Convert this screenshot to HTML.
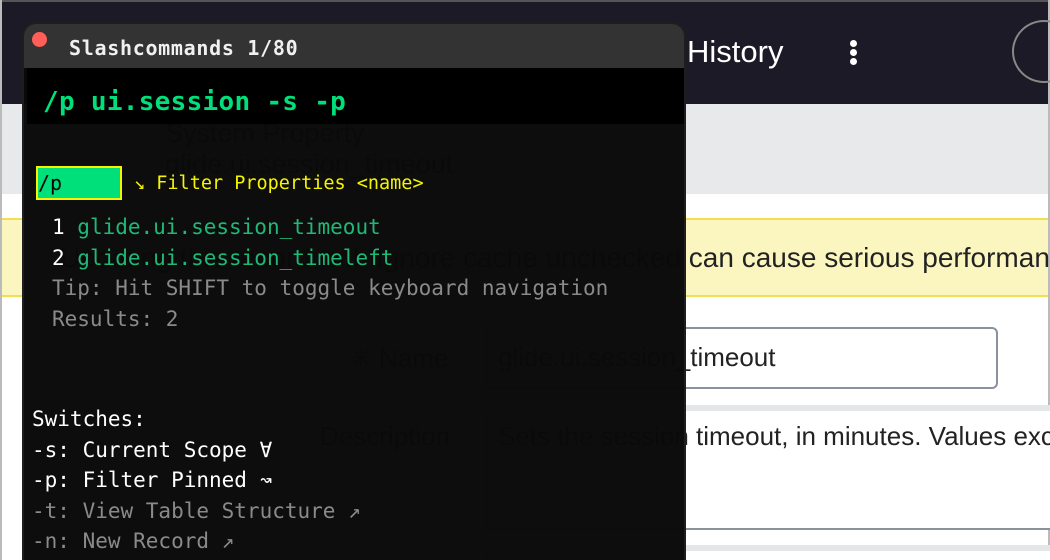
<!DOCTYPE html>
<html><head><style>
*{margin:0;padding:0;box-sizing:border-box}
html,body{width:1050px;height:560px;overflow:hidden}
body{background:#fff;position:relative;font-family:"Liberation Sans",sans-serif}
.a{position:absolute;white-space:nowrap}
.m{font-family:"DejaVu Sans Mono","Liberation Mono",monospace}
</style></head><body>
<!-- page -->
<div class="a" style="left:0;top:0;width:1050px;height:2px;background:#555"></div>
<div class="a" style="left:0;top:0;width:2px;height:560px;background:#bbb"></div>
<div class="a" style="right:0;top:0;width:2px;height:560px;background:#bbb"></div>
<div class="a" style="left:2px;top:2px;width:1046px;height:102px;background:#1b1a26"></div>
<div class="a" style="left:687px;top:34px;font-size:31px;color:#fff">History</div>
<div class="a" style="left:850px;top:40px;width:7px;height:7px;border-radius:50%;background:#fff"></div>
<div class="a" style="left:850px;top:49px;width:7px;height:7px;border-radius:50%;background:#fff"></div>
<div class="a" style="left:850px;top:58px;width:7px;height:7px;border-radius:50%;background:#fff"></div>
<div class="a" style="left:1012px;top:20px;width:64px;height:63px;border-radius:50%;border:2px solid #888"></div>
<div class="a" style="left:2px;top:104px;width:1046px;height:90px;background:#e8e9eb"></div>
<div class="a" style="left:165px;top:118px;font-size:27px;color:#222;line-height:31px">System Property<br>glide.ui.session_timeout</div>
<div class="a" style="left:2px;top:218px;width:1046px;height:79px;background:#fbf6c0;border-top:2px solid #f0e050;border-bottom:2px solid #f0e050"></div>
<div class="a" style="left:60px;top:242px;font-size:28px;color:#222">Updating this record with Ignore cache unchecked can cause serious performance</div>
<div class="a" style="left:350px;top:343px;font-size:26px;color:#333">✳ Name</div>
<div class="a" style="left:485px;top:327px;width:513px;height:62px;border:2px solid #8a929c;border-radius:6px;background:#fff"></div>
<div class="a" style="left:498px;top:342px;font-size:26px;color:#222">glide.ui.session_timeout</div>
<div class="a" style="left:320px;top:421px;font-size:26px;color:#333">Description</div>
<div class="a" style="left:485px;top:405px;width:570px;height:125px;border:2px solid #8a929c;border-top:6px solid #e4e6e8;border-radius:6px;background:#fff"></div>
<div class="a" style="left:498px;top:421px;font-size:26px;color:#222">Sets the session timeout, in minutes. Values exceed</div>
<div class="a" style="left:485px;top:545px;width:570px;height:15px;border:2px solid #8a929c;border-bottom:none;border-top:6px solid #e4e6e8;border-radius:6px 0 0 0;background:#fff"></div>
<!-- popup -->
<div class="a" style="left:22px;top:22px;width:664px;height:560px;border-radius:14px 14px 0 0;border:2px solid #1e1e1e;background:rgba(10,10,10,0.99);overflow:hidden">
  <div class="a" style="left:0;top:0;width:664px;height:44px;background:#333"></div>
  <div class="a" style="left:8px;top:8px;width:15px;height:15px;border-radius:50%;background:#ff5f57"></div>
  <div class="a m" style="left:45px;top:12px;font-size:20px;font-weight:bold;color:#f0f0f0;letter-spacing:0.7px">Slashcommands 1/80</div>
  <div class="a" style="left:3px;top:44px;width:660px;height:56px;background:#000"></div>
  <div class="a m" style="left:19px;top:63px;font-size:26px;font-weight:bold;color:#00e07a;letter-spacing:0.3px">/p ui.session -s -p</div>
  <div class="a" style="left:12px;top:142px;width:86px;height:34px;background:#00e07a;border:2px solid #f5f500"></div>
  <div class="a m" style="left:14px;top:147px;font-size:20px;color:#000">/p</div>
  <div class="a m" style="left:110px;top:149px;font-size:18.5px;color:#f5f500">↘ Filter Properties &lt;name&gt;</div>
  <div class="m a" style="left:28px;top:188px;font-size:21px;line-height:30.5px;color:#fff">1 <span style="color:#1fb877">glide.ui.session_timeout</span><br>2 <span style="color:#1fb877">glide.ui.session_timeleft</span><br><span style="color:#8a8a8a">Tip: Hit SHIFT to toggle keyboard navigation<br>Results: 2</span></div>
  <div class="m a" style="left:8px;top:380px;font-size:21px;line-height:30.5px;color:#fff">Switches:<br>-s: Current Scope ∀<br>-p: Filter Pinned ↝<br><span style="color:#8a8a8a">-t: View Table Structure ↗<br>-n: New Record ↗</span></div>
</div>
</body></html>
